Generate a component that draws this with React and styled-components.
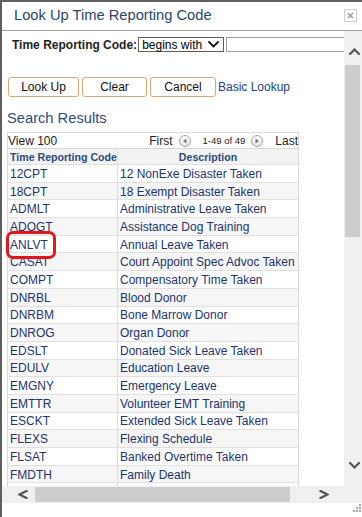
import React from 'react';
import styled, { createGlobalStyle } from 'styled-components';

const Global = createGlobalStyle`
  html, body { margin: 0; padding: 0; background: #fff; }
  body { font-family: "Liberation Sans", Arial, sans-serif; }
  * { box-sizing: border-box; }
`;

const Window = styled.div`
  width: 362px;
  height: 517px;
  border-top: 2px solid #5e5e5e;
  border-left: 2px solid #5e5e5e;
  background: #fff;
  display: flex;
  flex-direction: column;
  overflow: hidden;
`;

const TitleBar = styled.div`
  flex: none;
  height: 29px;
  display: flex;
  align-items: center;
  justify-content: space-between;
  padding: 0 5px 0 12px;
  border-bottom: 1px solid #a3a3a3;
`;

const Title = styled.div`
  font-size: 14.7px;
  color: #2d4569;
  line-height: 17px;
  margin-top: -1px;
`;

const CloseBox = styled.div`
  width: 13px;
  height: 13px;
  border: 1px solid #cfcfcf;
  display: flex;
  align-items: center;
  justify-content: center;
  margin-top: -1px;
`;

const Body = styled.div`
  flex: none;
  height: 472px;
  display: grid;
  grid-template-columns: 342px 18px;
  grid-template-rows: 455px 17px;
`;

const Content = styled.div`
  overflow: hidden;
  padding-top: 6px;
  white-space: nowrap;
`;

const FilterRow = styled.div`
  display: flex;
  align-items: center;
  height: 15px;
  padding-left: 10px;
`;

const Label = styled.span`
  font-size: 12px;
  font-weight: bold;
  color: #1e1e1e;
  margin-right: 1px;
`;

const SelectBox = styled.div`
  flex: none;
  width: 86px;
  height: 15px;
  border: 1px solid #5f5f5f;
  display: flex;
  align-items: center;
  justify-content: space-between;
  padding: 0 4px 0 3px;
  font-size: 12px;
  color: #000;
`;

const TextInput = styled.input`
  flex: none;
  width: 170px;
  height: 15px;
  margin: 0 0 0 2px;
  border: 1px solid #9e9e9e;
  padding: 0;
  background: #fff;
`;

const ButtonRow = styled.div`
  display: flex;
  align-items: center;
  gap: 3px;
  margin-top: 25px;
  padding-left: 6px;
`;

const Button = styled.button`
  width: ${p => p.$w}px;
  height: 20px;
  padding: 0;
  border: 1px solid #d4a878;
  border-radius: 3px;
  background: #fff;
  font-family: "Liberation Sans", Arial, sans-serif;
  font-size: 12px;
  color: #111;
`;

const Link = styled.span`
  font-size: 12px;
  color: #22418a;
  margin-left: -1px;
`;

const SectionTitle = styled.div`
  margin: 13px 0 0 5px;
  font-size: 14.7px;
  line-height: 17px;
  color: #2d4d78;
`;

const Grid = styled.div`
  margin: 5px 0 0 5px;
  width: 292px;
  border: 1px solid #d8d8d8;
  border-bottom: none;
`;

const NavRow = styled.div`
  height: 15px;
  display: flex;
  align-items: center;
  justify-content: space-between;
  font-size: 12px;
  color: #1e1e1e;
`;

const NavGroup = styled.div`
  display: flex;
  align-items: center;
`;

const Count = styled.span`
  font-size: 9.5px;
  color: #222;
`;

const NavIcon = styled.span`
  display: inline-flex;
  align-items: center;
  justify-content: center;
  width: 12px;
  height: 12px;
  border-radius: 50%;
  border: 1px solid #a4a4a4;
  background: linear-gradient(#ffffff, #e6e6e6);
  margin: 0 12px 0 6px;
`;

const Row = styled.div`
  display: grid;
  grid-template-columns: 110px 1fr;
  height: ${p => (p.$head ? '16px' : '17.7px')};
  border-top: 1px solid ${p => (p.$head ? '#d8d8d8' : '#e0e0e0')};
  background: ${p => (p.$head ? '#f3f3f3' : p.$alt ? '#f6f6f6' : '#fff')};
`;

const Cell = styled.div`
  display: flex;
  align-items: center;
  justify-content: ${p => (p.$center ? 'center' : 'flex-start')};
  padding-left: ${p => (p.$center ? 0 : 2)}px;
  padding-top: ${p => (p.$head ? 0 : 1)}px;
  font-size: ${p => (p.$head ? '10.6px' : '12px')};
  font-weight: ${p => (p.$head ? 'bold' : 'normal')};
  color: ${p => (p.$head ? '#2a4a7c' : '#20336e')};
  border-right: ${p => (p.$first ? '1px solid #dcdcdc' : 'none')};
`;

const Highlight = styled.span`
  position: relative;
  display: inline-block;
  line-height: 14px;
  &::after {
    content: '';
    position: absolute;
    z-index: 2;
    left: -4px;
    right: -8px;
    top: -7px;
    bottom: -7px;
    border: 3px solid #e3161e;
    border-radius: 7px;
  }
`;

const VScroll = styled.div`
  background: #f0f0f0;
  display: flex;
  flex-direction: column;
`;

const VArrow = styled.div`
  flex: none;
  height: 34px;
  display: flex;
  justify-content: center;
  align-items: flex-start;
  padding-top: ${p => p.$pt}px;
  padding-left: 2px;
`;

const VTrack = styled.div`
  flex: 1;
  padding-left: 1px;
`;

const VThumb = styled.div`
  width: 15px;
  height: 172px;
  background: #cdcdcd;
`;

const HScroll = styled.div`
  grid-column: 1 / 3;
  background: #f0f0f0;
  display: flex;
  align-items: center;
  padding-left: 16px;
`;

const HThumb = styled.div`
  width: 255px;
  height: 15px;
  background: #cdcdcd;
  margin: 0 29px 0 7px;
`;

const Footer = styled.div`
  flex: 1;
  display: flex;
  justify-content: flex-end;
  align-items: flex-start;
  padding-right: 1px;
`;

const rows = [
  ['12CPT', '12 NonExe Disaster Taken'],
  ['18CPT', '18 Exempt Disaster Taken'],
  ['ADMLT', 'Administrative Leave Taken'],
  ['ADOGT', 'Assistance Dog Training'],
  ['ANLVT', 'Annual Leave Taken'],
  ['CASAT', 'Court Appoint Spec Advoc Taken'],
  ['COMPT', 'Compensatory Time Taken'],
  ['DNRBL', 'Blood Donor'],
  ['DNRBM', 'Bone Marrow Donor'],
  ['DNROG', 'Organ Donor'],
  ['EDSLT', 'Donated Sick Leave Taken'],
  ['EDULV', 'Education Leave'],
  ['EMGNY', 'Emergency Leave'],
  ['EMTTR', 'Volunteer EMT Training'],
  ['ESCKT', 'Extended Sick Leave Taken'],
  ['FLEXS', 'Flexing Schedule'],
  ['FLSAT', 'Banked Overtime Taken'],
  ['FMDTH', 'Family Death'],
  ['', ''],
];

const Chevron = ({ dir, color = '#555', w = 11, h = 7, sw = 2.2 }) => {
  const paths = {
    up: `M1 ${h - 1} L${w / 2} 1.5 L${w - 1} ${h - 1}`,
    down: `M1 1 L${w / 2} ${h - 1.5} L${w - 1} 1`,
    left: `M${w - 1.5} 1 L1.5 ${h / 2} L${w - 1.5} ${h - 1}`,
    right: `M1.5 1 L${w - 1.5} ${h / 2} L1.5 ${h - 1}`,
  };
  return (
    <svg width={w} height={h} viewBox={`0 0 ${w} ${h}`} style={{ display: 'block' }}>
      <path d={paths[dir]} fill="none" stroke={color} strokeWidth={sw} strokeLinecap="square" />
    </svg>
  );
};

const NavTri = ({ dir }) => (
  <svg width="6" height="6" viewBox="0 0 6 6" style={{ display: 'block' }}>
    {dir === 'left' ? (
      <path d="M4.5 0.5 L1 3 L4.5 5.5 Z" fill="#7a7a7a" />
    ) : (
      <path d="M1.5 0.5 L5 3 L1.5 5.5 Z" fill="#7a7a7a" />
    )}
  </svg>
);

export default function App() {
  return (
    <>
      <Global />
      <Window>
        <TitleBar>
          <Title>Look Up Time Reporting Code</Title>
          <CloseBox>
            <svg width="7" height="7" viewBox="0 0 7 7" style={{ display: 'block' }}>
              <path d="M1 1 L6 6 M6 1 L1 6" stroke="#9a9a9a" strokeWidth="1.3" />
            </svg>
          </CloseBox>
        </TitleBar>
        <Body>
          <Content>
            <FilterRow>
              <Label>Time Reporting Code:</Label>
              <SelectBox>
                <span>begins with</span>
                <Chevron dir="down" color="#111" w={11} h={7} sw={1.8} />
              </SelectBox>
              <TextInput type="text" />
            </FilterRow>
            <ButtonRow>
              <Button $w={71}>Look Up</Button>
              <Button $w={65}>Clear</Button>
              <Button $w={66}>Cancel</Button>
              <Link>Basic Lookup</Link>
            </ButtonRow>
            <SectionTitle>Search Results</SectionTitle>
            <Grid>
              <NavRow>
                <span>View 100</span>
                <NavGroup>
                  <span>First</span>
                  <NavIcon><NavTri dir="left" /></NavIcon>
                  <Count>1-49 of 49</Count>
                  <NavIcon><NavTri dir="right" /></NavIcon>
                  <span>Last</span>
                </NavGroup>
              </NavRow>
              <Row $head>
                <Cell $head $first>Time Reporting Code</Cell>
                <Cell $head $center>Description</Cell>
              </Row>
              {rows.map(([code, desc], i) => (
                <Row key={code || 'tail'} $alt={i % 2 === 1}>
                  <Cell $first>
                    {code === 'ANLVT' ? <Highlight>{code}</Highlight> : code}
                  </Cell>
                  <Cell>{desc}</Cell>
                </Row>
              ))}
            </Grid>
          </Content>
          <VScroll>
            <VArrow $pt={17}><Chevron dir="up" /></VArrow>
            <VTrack><VThumb /></VTrack>
            <VArrow $pt={10}><Chevron dir="down" /></VArrow>
          </VScroll>
          <HScroll>
            <Chevron dir="left" w={10} h={9} />
            <HThumb />
            <Chevron dir="right" w={10} h={9} />
          </HScroll>
        </Body>
        <Footer>
          <svg width="10" height="10" viewBox="0 0 10 10" style={{ display: 'block' }}>
            <g fill="#a9a9a9">
              <rect x="8" y="1" width="2" height="2" />
              <rect x="5" y="4" width="2" height="2" />
              <rect x="8" y="4" width="2" height="2" />
              <rect x="2" y="7" width="2" height="2" />
              <rect x="5" y="7" width="2" height="2" />
              <rect x="8" y="7" width="2" height="2" />
            </g>
          </svg>
        </Footer>
      </Window>
    </>
  );
}
